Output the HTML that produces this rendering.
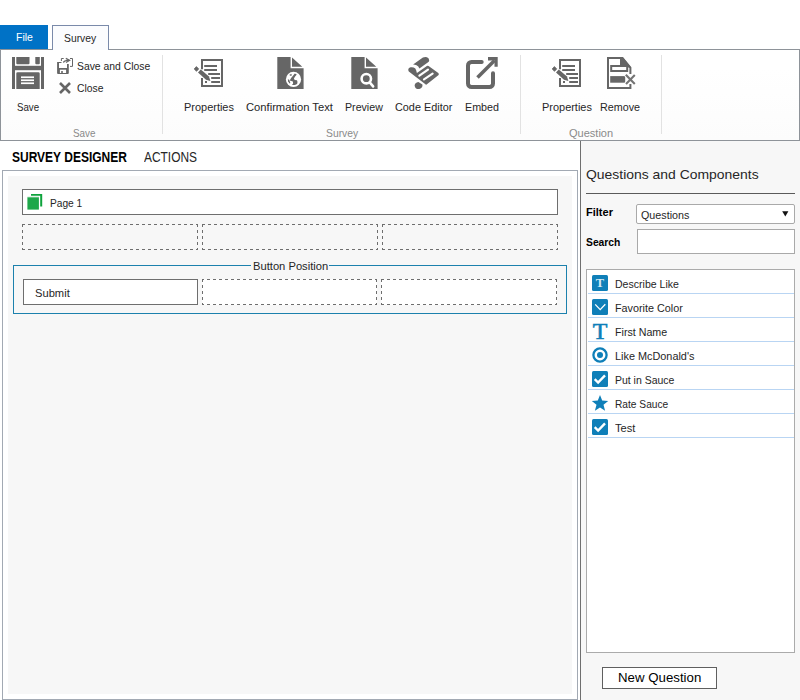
<!DOCTYPE html>
<html lang="en">
<head>
<meta charset="utf-8">
<title>Survey Designer</title>
<style>
html,body{margin:0;padding:0;}
body{width:800px;height:700px;position:relative;overflow:hidden;background:#fff;font-family:"Liberation Sans",sans-serif;}
.a{position:absolute;box-sizing:border-box;}
.t{position:absolute;white-space:pre;line-height:20px;transform-origin:0 0;font-family:"Liberation Sans",sans-serif;}
svg{position:absolute;overflow:visible;}
.dash{position:absolute;box-sizing:border-box;background-color:#f7f7f7;
 background-image:repeating-linear-gradient(90deg,#6e6e6e 0 3px,transparent 3px 6px),repeating-linear-gradient(90deg,#6e6e6e 0 3px,transparent 3px 6px),repeating-linear-gradient(180deg,#6e6e6e 0 3px,transparent 3px 6px),repeating-linear-gradient(180deg,#6e6e6e 0 3px,transparent 3px 6px);
 background-size:calc(100% + 6px) 1px,calc(100% + 6px) 1px,1px 100%,1px 100%;
 background-position:0 0,0 100%,0 0,100% 0;
 background-repeat:no-repeat;}
.dash.w{background-color:#fff;}
.box{position:absolute;box-sizing:border-box;border:1px solid #6e6e6e;background:#fff;}
.sep{position:absolute;width:1px;background:#e2e2e2;top:55px;height:79px;}
.ln{position:absolute;left:588px;width:206px;height:1px;background:#b9d5f3;}

</style>
</head>
<body>
<!-- ribbon -->
<div class="a" style="left:0;top:49px;width:800px;height:92px;border:1px solid #8e9399;background:linear-gradient(#fff,#fff 20%,#fcfcfc)"></div>
<div class="a" style="left:0;top:25px;width:48px;height:24px;background:#0072c6"></div>
<div class="a" style="left:52px;top:25px;width:57px;height:25px;border:1px solid #7a8aaa;border-bottom:none;background:#fbfcfe"></div>
<div class="sep" style="left:162px"></div>
<div class="sep" style="left:520px"></div>
<div class="sep" style="left:661px"></div>

<!-- save icon -->
<svg style="left:12px;top:57px" width="32" height="32" viewBox="0 0 32 32">
 <g fill="#666">
  <rect x="0" y="0" width="3" height="32"/><rect x="29" y="0" width="3" height="32"/>
  <rect x="0" y="8.800" width="32" height="4.400"/>
  <path d="M4.300 0h13.200v6.200a1 1 0 0 1-1 1H5.300a1 1 0 0 1-1-1z"/>
  <path d="M23.300 0h4.500v6.200a1 1 0 0 1-1 1h-2.500a1 1 0 0 1-1-1z"/>
  <path d="M4.3 32V16.5a1.3 1.3 0 0 1 1.3-1.3h20.8a1.3 1.3 0 0 1 1.3 1.3V32z"/>
 </g>
 <g fill="#fff"><rect x="9" y="19.4" width="13" height="1.7"/><rect x="9" y="22.4" width="13" height="1.7"/><rect x="9" y="25.4" width="13" height="1.7"/></g>
</svg>
<!-- save and close icon -->
<svg style="left:57px;top:58px" width="16" height="16" viewBox="0 0 16 16">
 <path d="M0.100 4h4.400v1H2V9.900h8V6.100h1.800V15a0.900 0.900 0 0 1-.9.900H1A0.900 0.900 0 0 1 0.100 15z" fill="#666"/>
 <rect x="2.900" y="11.700" width="6.200" height="3.300" fill="#fff"/>
 <rect x="4.200" y="13" width="1.600" height="2.900" fill="#666"/>
 <g fill="none" stroke="#666">
  <path d="M6.700 0.500H4.400V3"/><path d="M13 0.500h2.500V8.400H13"/>
  <path d="M6.500 4.700Q6.900 2.300 12 2.400" stroke-width="1.300"/>
  <path d="M8.800 0.400l3.900 2-3.700 2.200" stroke-width="1.200"/>
 </g>
</svg>
<!-- close x -->
<svg style="left:59px;top:82px" width="12" height="12" viewBox="0 0 12 12"><path d="M1 1l10 10M11 1L1 11" stroke="#666" stroke-width="2.6" fill="none"/></svg>

<!-- properties icons -->
<svg style="left:193px;top:57px" width="32" height="32" viewBox="0 0 32 32">
  <path d="M9 12.300V3h20v26H9v-8" fill="none" stroke="#666" stroke-width="2"/>
  <g fill="#666">
   <rect x="11.200" y="8" width="12.800" height="2"/><rect x="11.200" y="12" width="12.800" height="2"/>
   <rect x="15.200" y="16" width="11.800" height="2"/><rect x="18.200" y="20" width="8.800" height="2"/>
   <rect x="18.200" y="24" width="8.800" height="2"/><rect x="12" y="24" width="2" height="2"/>
   <path d="M3.400 9.600l2.300 2.300-2.200 2.400-2.300-2.300z" stroke="#666" stroke-width="0.800" stroke-linejoin="round"/>
   <path d="M5 15.600l2.800-3.200 8.200 7.200 1.400 4.400-4.400-1.300z"/>
  </g>
 </svg>
<svg style="left:551px;top:57px" width="32" height="32" viewBox="0 0 32 32">
  <path d="M9 12.300V3h20v26H9v-8" fill="none" stroke="#666" stroke-width="2"/>
  <g fill="#666">
   <rect x="11.200" y="8" width="12.800" height="2"/><rect x="11.200" y="12" width="12.800" height="2"/>
   <rect x="15.200" y="16" width="11.800" height="2"/><rect x="18.200" y="20" width="8.800" height="2"/>
   <rect x="18.200" y="24" width="8.800" height="2"/><rect x="12" y="24" width="2" height="2"/>
   <path d="M3.400 9.600l2.300 2.300-2.200 2.400-2.300-2.300z" stroke="#666" stroke-width="0.800" stroke-linejoin="round"/>
   <path d="M5 15.600l2.800-3.200 8.200 7.200 1.400 4.400-4.400-1.300z"/>
  </g>
 </svg>

<!-- confirmation text icon -->
<svg style="left:277px;top:57px" width="27" height="32" viewBox="0 0 27 32"><path d="M0.300 0h13.300v11.200h13v20.800H0.300z" fill="#666"/><path d="M15 0.600v9.200h10.300z" fill="#666"/>
 <circle cx="16.500" cy="22.400" r="7.600" fill="#fff"/>
 <g fill="#666">
  <path d="M17.800 16.500l2 1.100-1.700 1.800-1.200 2.100.8 1.400 2.300.4.500 1.800-.4 1.900-2.200.9-2.900.2 1.100-1.500-.2-2.200-3.200-.9 1.600-2.800 1.700-1.900z"/>
  <path d="M12.400 17.800l1.700-1 .6.500.3 1.100-1.900.7z" fill-opacity="0.800"/>
  <path d="M10.800 22.300l1.400.4 1.200 3.400-.9.500-1.400-2.400z"/>
 </g>
</svg>
<!-- preview icon -->
<svg style="left:351px;top:57px" width="27" height="32" viewBox="0 0 27 32"><path d="M0.300 0h13.300v11.200h13v20.800H0.300z" fill="#666"/><path d="M15 0.600v9.200h10.300z" fill="#666"/>
 <circle cx="15.3" cy="21.7" r="4.7" fill="none" stroke="#fff" stroke-width="2.6"/>
 <path d="M18.9 25.6l3.2 3.8" stroke="#fff" stroke-width="2.6" stroke-linecap="round" fill="none"/>
</svg>
<!-- code editor icon -->
<svg style="left:408px;top:57px" width="32" height="32" viewBox="0 0 32 32">
 <g fill="#666">
  <path d="M5.1 7.4L14.9 0.5Q17 -0.3 19 0.2Q21.3 1.3 21.2 3.4Q21 4.4 20.4 4.9L11.4 11.4Q10.6 9.2 8.6 8.2Q7 7.5 5.1 7.4z"/>
  <path d="M0.3 12.2Q0.5 10.6 2.6 10.2Q5.6 9.8 7.3 11.6Q8.2 13 8.9 16L18.9 8.9Q19.8 8.6 20.6 9.1L30.3 16Q31.2 17 30.6 18L18.6 27.6Q17.8 27.8 17.1 27.1L0.8 14.6Q0.2 13.6 0.3 12.2z"/>
  <path d="M6.6 28.4Q6.8 25.6 10.4 25L14.4 27.6Q15 30.8 11.4 32Q7 32.4 6.6 28.4z"/>
 </g>
 <path d="M11.4 18.6L20 12.6M16 22.3L24.6 16.6" stroke="#fff" stroke-width="2.2" stroke-linecap="round" fill="none"/>
</svg>
<!-- embed icon -->
<svg style="left:466px;top:57px" width="32" height="32" viewBox="0 0 32 32">
 <path d="M15.700 5H5.500A3.500 3.500 0 0 0 2 8.500V26.500A3.500 3.500 0 0 0 5.500 30H23.500A3.500 3.500 0 0 0 27 26.500V16.300" fill="none" stroke="#666" stroke-width="4" stroke-linecap="round"/>
 <path d="M11.500 20.500L28.500 3.500" stroke="#666" stroke-width="3.500" fill="none"/>
 <path d="M22 0h9.700v9.700h-3.200V3.400H22z" fill="#666"/>
</svg>
<!-- remove icon -->
<svg style="left:604px;top:57px" width="32" height="32" viewBox="0 0 32 32">
 <path d="M26.400 17V10.500L18.500 1H4V31H26.400V27" fill="none" stroke="#666" stroke-width="2"/>
 <path d="M16 0.500h3l8 10H16z" fill="#666"/>
 <rect x="7.200" y="9" width="16" height="5" fill="#fff" stroke="#666" stroke-width="2"/>
 <rect x="6.200" y="19.100" width="15" height="6.600" fill="#666"/>
 <path d="M21.700 17.700L30.900 27.100M30.900 17.900L21.900 27.100" stroke="#fff" stroke-width="3.800" fill="none"/>
 <path d="M21.800 17.800L30.800 27M30.800 18L22 27" stroke="#747474" stroke-width="2.100" fill="none"/>
</svg>

<!-- main designer panel -->
<div class="a" style="left:2px;top:170px;width:576px;height:530px;border:1px solid #a2a9b3;background:#fff"></div>
<div class="a" style="left:8px;top:176px;width:564px;height:518px;background:#f7f7f7"></div>
<div class="box" style="left:22px;top:189px;width:536px;height:26px"></div>
<svg style="left:27px;top:194px" width="16" height="16" viewBox="0 0 16 16"><path d="M4 0H15.200V12.400H13.200V1.750H4z" fill="#0ea33c"/><rect x="0.400" y="2.700" width="11.500" height="1" fill="#a9ddb9"/><rect x="0.400" y="3.400" width="11.500" height="12.200" fill="#1ea74a"/></svg>
<div class="dash" style="left:22px;top:224px;width:176px;height:26px"></div>
<div class="dash" style="left:202px;top:224px;width:176px;height:26px"></div>
<div class="dash" style="left:382px;top:224px;width:176px;height:26px"></div>
<div class="a" style="left:13px;top:265px;width:554px;height:49px;border:1px solid #1c81ad"></div>
<div class="a" style="left:251px;top:262px;width:78px;height:8px;background:#f7f7f7"></div>
<div class="box" style="left:23px;top:279px;width:175px;height:26px"></div>
<div class="dash w" style="left:202px;top:279px;width:175px;height:26px;background-position:-1px 0,-1px 100%,0 0,100% 0"></div>
<div class="dash w" style="left:381px;top:279px;width:176px;height:26px"></div>

<!-- right panel -->
<div class="a" style="left:580px;top:141px;width:220px;height:559px;border-left:1px solid #6f6f6f;background:#f7f7f7"></div>
<div class="a" style="left:586px;top:193px;width:209px;height:1px;background:#5a5a5a"></div>
<div class="a" style="left:636px;top:204px;width:159px;height:20px;border:1px solid #a9a9a9;border-radius:2px;background:#fff"></div>
<svg style="left:782px;top:211px" width="7" height="6" viewBox="0 0 7 6"><path d="M0.200 0.200h6.200L3.300 5.600z" fill="#111"/></svg>
<div class="a" style="left:637px;top:229px;width:158px;height:25px;border:1px solid #a9a9a9;background:#fff"></div>
<div class="a" style="left:586px;top:269px;width:209px;height:384px;border:1px solid #ababab;background:#fff"></div>
<div class="ln" style="top:293px"></div><div class="ln" style="top:317px"></div><div class="ln" style="top:341px"></div><div class="ln" style="top:365px"></div><div class="ln" style="top:389px"></div><div class="ln" style="top:413px"></div><div class="ln" style="top:437px"></div>

<!-- list icons -->
<svg style="left:592px;top:275px" width="16" height="16" viewBox="0 0 16 16"><rect width="16" height="16" rx="1.500" fill="#0f7fb8"/><text x="8" y="12.300" text-anchor="middle" font-family="Liberation Serif, serif" font-size="12.500" font-weight="700" fill="#d4eaf5">T</text></svg>
<svg style="left:592px;top:299px" width="16" height="16" viewBox="0 0 16 16"><rect width="16" height="16" rx="1.500" fill="#0f7fb8"/><path d="M3.200 5.400L8.200 10.600L13.300 5.300" fill="none" stroke="#fff" stroke-width="1.300"/></svg>
<svg style="left:592px;top:323px" width="16" height="16" viewBox="0 0 16 16"><text x="8" y="16" text-anchor="middle" font-family="Liberation Serif, serif" font-size="24" fill="#0f7fb8" stroke="#0f7fb8" stroke-width="0.600">T</text></svg>
<svg style="left:592px;top:347px" width="16" height="16" viewBox="0 0 16 16"><circle cx="8" cy="8" r="6.600" fill="none" stroke="#0f7fb8" stroke-width="2.300"/><circle cx="8" cy="8" r="3" fill="#0f7fb8"/></svg>
<svg style="left:592px;top:371px" width="16" height="16" viewBox="0 0 16 16"><rect width="16" height="16" rx="1.500" fill="#0f7fb8"/><path d="M2.700 8.200l3.400 3.300L13 4.300" fill="none" stroke="#fff" stroke-width="2.400"/></svg>
<svg style="left:592px;top:395px" width="16" height="16" viewBox="0 0 16 16"><path d="M8 0l2.200 5.600 6 .4-4.700 3.800 1.600 5.900L8 12.400 2.900 15.700l1.600-5.900L-0.200 6l6-.4z" fill="#0f7fb8"/></svg>
<svg style="left:592px;top:419px" width="16" height="16" viewBox="0 0 16 16"><rect width="16" height="16" rx="1.500" fill="#0f7fb8"/><path d="M2.700 8.200l3.400 3.300L13 4.300" fill="none" stroke="#fff" stroke-width="2.400"/></svg>

<!-- new question button -->
<div class="a" style="left:602px;top:667px;width:115px;height:22px;border:1px solid #5f5f5f;background:#fff"></div>

<!-- text labels -->
<div class="t" style="left:16.39px;top:27.00px;font-size:11.5px;font-weight:400;color:#ffffff;transform:scaleX(0.9118)">File</div>
<div class="t" style="left:64.45px;top:27.50px;font-size:11.5px;font-weight:400;color:#262626;transform:scaleX(0.8993)">Survey</div>
<div class="t" style="left:76.95px;top:56.00px;font-size:11.5px;font-weight:400;color:#262626;transform:scaleX(0.9009)">Save and Close</div>
<div class="t" style="left:76.95px;top:78.00px;font-size:11.5px;font-weight:400;color:#262626;transform:scaleX(0.9018)">Close</div>
<div class="t" style="left:17.38px;top:97.00px;font-size:11.5px;font-weight:400;color:#262626;transform:scaleX(0.8436)">Save</div>
<div class="t" style="left:184.05px;top:97.00px;font-size:11.5px;font-weight:400;color:#262626;transform:scaleX(0.9529)">Properties</div>
<div class="t" style="left:245.91px;top:97.00px;font-size:11.5px;font-weight:400;color:#262626;transform:scaleX(0.9735)">Confirmation Text</div>
<div class="t" style="left:345.07px;top:97.00px;font-size:11.5px;font-weight:400;color:#262626;transform:scaleX(0.9250)">Preview</div>
<div class="t" style="left:395.23px;top:97.00px;font-size:11.5px;font-weight:400;color:#262626;transform:scaleX(0.9433)">Code Editor</div>
<div class="t" style="left:464.87px;top:97.00px;font-size:11.5px;font-weight:400;color:#262626;transform:scaleX(0.9324)">Embed</div>
<div class="t" style="left:542.20px;top:97.00px;font-size:11.5px;font-weight:400;color:#262626;transform:scaleX(0.9520)">Properties</div>
<div class="t" style="left:600.06px;top:97.00px;font-size:11.5px;font-weight:400;color:#262626;transform:scaleX(0.9358)">Remove</div>
<div class="t" style="left:72.97px;top:123.00px;font-size:11.5px;font-weight:400;color:#8a8a8a;transform:scaleX(0.8594)">Save</div>
<div class="t" style="left:325.55px;top:123.00px;font-size:11.5px;font-weight:400;color:#8a8a8a;transform:scaleX(0.8993)">Survey</div>
<div class="t" style="left:569.22px;top:123.00px;font-size:11.5px;font-weight:400;color:#8a8a8a;transform:scaleX(0.9587)">Question</div>
<div class="t" style="left:12.47px;top:146.70px;font-size:14px;font-weight:700;color:#000000;transform:scaleX(0.8570)">SURVEY DESIGNER</div>
<div class="t" style="left:143.80px;top:146.70px;font-size:14px;font-weight:400;color:#262626;transform:scaleX(0.8520)">ACTIONS</div>
<div class="t" style="left:50.11px;top:193.00px;font-size:11.5px;font-weight:400;color:#262626;transform:scaleX(0.8857)">Page 1</div>
<div class="t" style="left:252.63px;top:256.00px;font-size:11.5px;font-weight:400;color:#262626;transform:scaleX(0.9722)">Button Position</div>
<div class="t" style="left:34.91px;top:283.00px;font-size:11.5px;font-weight:400;color:#262626;transform:scaleX(0.9702)">Submit</div>
<div class="t" style="left:586.23px;top:164.60px;font-size:13.5px;font-weight:400;color:#262626;transform:scaleX(1.0316)">Questions and Components</div>
<div class="t" style="left:586.48px;top:202.00px;font-size:11.5px;font-weight:700;color:#000000;transform:scaleX(0.9578)">Filter</div>
<div class="t" style="left:585.95px;top:232.00px;font-size:11.5px;font-weight:700;color:#000000;transform:scaleX(0.8966)">Search</div>
<div class="t" style="left:640.93px;top:205.00px;font-size:11.5px;font-weight:400;color:#262626;transform:scaleX(0.9340)">Questions</div>
<div class="t" style="left:615.18px;top:274.00px;font-size:11.5px;font-weight:400;color:#262626;transform:scaleX(0.9172)">Describe Like</div>
<div class="t" style="left:615.16px;top:298.00px;font-size:11.5px;font-weight:400;color:#262626;transform:scaleX(0.9380)">Favorite Color</div>
<div class="t" style="left:615.17px;top:322.00px;font-size:11.5px;font-weight:400;color:#262626;transform:scaleX(0.9279)">First Name</div>
<div class="t" style="left:615.15px;top:346.00px;font-size:11.5px;font-weight:400;color:#262626;transform:scaleX(0.9455)">Like McDonald's</div>
<div class="t" style="left:615.19px;top:370.00px;font-size:11.5px;font-weight:400;color:#262626;transform:scaleX(0.9098)">Put in Sauce</div>
<div class="t" style="left:615.21px;top:394.00px;font-size:11.5px;font-weight:400;color:#262626;transform:scaleX(0.8855)">Rate Sauce</div>
<div class="t" style="left:614.76px;top:418.00px;font-size:11.5px;font-weight:400;color:#262626;transform:scaleX(0.9639)">Test</div>
<div class="t" style="left:618.31px;top:668.00px;font-size:13.33px;font-weight:400;color:#000000;transform:scaleX(0.9945)">New Question</div>
</body>
</html>
